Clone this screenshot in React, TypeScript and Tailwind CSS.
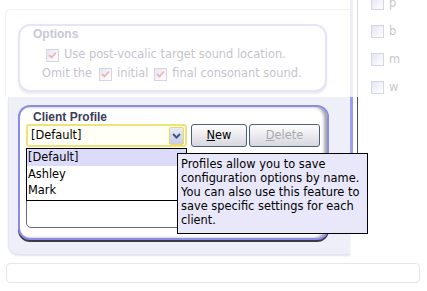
import React from "react";

const font = { fontFamily: '"DejaVu Sans", Verdana, sans-serif' };
const boldFont = { fontFamily: '"Liberation Sans", Arial, sans-serif' };

function FadedCheck({ checked }: { checked?: boolean }) {
  return (
    <span className="w-[13px] h-[13px] shrink-0 border border-[#d6d6e2] bg-gradient-to-br from-[#e6e6f6] to-white flex items-center justify-center">
      {checked && (
        <svg width="9" height="8" viewBox="0 0 9 8">
          <path d="M1 4 L3.5 6.5 L8 1.5" stroke="#f0b4b4" strokeWidth="1.8" fill="none" />
        </svg>
      )}
    </span>
  );
}

export default function App() {
  return (
    <div
      className="w-[427px] h-[291px] bg-white overflow-hidden relative flex flex-col text-[11.4px] text-black"
      style={font}
    >
      {/* Row A */}
      <div className="flex h-[256px]">
        {/* Left column */}
        <div className="w-[350px] flex flex-col">
          {/* Top faded section */}
          <div className="h-[97px] pl-[5px] pt-[9px]">
            <div className="h-full border-l border-t border-[#f0f0f5] rounded-tl-[6px] pl-[12px] pt-[14px]">
              <div className="w-[309px] h-[68px] border-2 border-[#e4e4fa] rounded-[12px] bg-white shadow-[0_2px_2px_#ececf0] pt-[1px] text-[#c4c4cc]">
                <div className="pl-[13px] leading-[14px] text-[12px] font-bold text-[#c8c8d8]" style={boldFont}>
                  Options
                </div>
                <div className="mt-[6px] h-[16px] flex items-center pl-[26px] gap-[5px]">
                  <FadedCheck checked />
                  <span>Use post-vocalic target sound location.</span>
                </div>
                <div className="mt-[3px] h-[16px] flex items-center pl-[22px]">
                  <span>Omit the</span>
                  <span className="ml-[7px]"><FadedCheck checked /></span>
                  <span className="ml-[5px]">initial</span>
                  <span className="ml-[6px]"><FadedCheck checked /></span>
                  <span className="ml-[5px]">final consonant sound.</span>
                </div>
              </div>
            </div>
          </div>
          {/* Lavender band */}
          <div className="h-[157px] ml-[8px] bg-[#efeffa] border-l border-[#e6e6f6] rounded-bl-[10px] shadow-[0_2px_2px_#e2e2ea] pl-[9px] pt-[8px]">
            {/* Client Profile panel */}
            <div className="w-[311px] h-[135px] bg-white border-2 border-[#8c8ce8] rounded-[12px] shadow-[0_2px_0_#3a3a44,inset_-3px_0_3px_rgba(0,0,0,0.35)] pt-[3px] pl-[6px] relative">
              <div className="pl-[7px] leading-[14px] text-[12px] font-bold text-[#3c3c58]" style={boldFont}>
                Client Profile
              </div>
              <div className="flex items-center">
                <div className="w-[161px] h-[23px] border-2 border-[#efe27a] rounded-[3px] bg-[#fffff6] flex items-center pl-[3px] pr-[1px]">
                  <span className="flex-1">[Default]</span>
                  <span className="w-[15px] h-[18px] border border-[#e9da5a] rounded-[2px] bg-gradient-to-b from-[#eaeaf8] to-[#c8cce8] flex items-center justify-center">
                    <svg width="9" height="6" viewBox="0 0 9 6">
                      <path d="M1 1 L4.5 4.5 L8 1" stroke="#44587e" strokeWidth="2" fill="none" />
                    </svg>
                  </span>
                </div>
                <button className="ml-[4px] w-[56px] h-[23px] border border-[#4a6078] rounded-[3px] bg-gradient-to-b from-white to-[#d6d6de] text-black leading-none">
                  <span className="underline">N</span>ew
                </button>
                <button className="ml-[2px] w-[71px] h-[23px] border border-[#4a6078] rounded-[3px] bg-gradient-to-b from-white to-[#d6d6de] text-[#a8a8b0] leading-none">
                  <span className="underline">D</span>elete
                </button>
              </div>
              {/* underlying list box */}
              <div className="mt-[1px] w-[160px] h-[80px] border border-[#6a6a7a] rounded-b-[5px] bg-white" />
              {/* dropdown popup */}
              <div className="absolute left-[6px] top-[41px] w-[161px] h-[53px] border border-black bg-white">
                <div className="h-[17px] bg-[#dcdcfa] pl-[1px] leading-[17px]">[Default]</div>
                <div className="h-[16px] pl-[1px] leading-[16px]">Ashley</div>
                <div className="h-[16px] pl-[1px] leading-[16px]">Mark</div>
              </div>
            </div>
          </div>
        </div>
        {/* Divider lines */}
        <div className="w-[8px] flex">
          <div className="w-[3px] flex flex-col">
            <div className="h-[97px] bg-[#ececfa]" />
            <div className="h-[118px] bg-[#9c9cf0]" />
          </div>
          <div className="w-[4px]" />
          <div className="w-[1px] flex flex-col">
            <div className="h-[97px] bg-[#dcdce0]" />
            <div className="h-[118px] bg-[#50505c]" />
          </div>
        </div>
        {/* Right column */}
        <div className="flex-1 flex flex-col pl-[13px] mt-[-3px] text-[#c8c8cc]">
          {["p", "b", "m", "w"].map((l) => (
            <div key={l} className="h-[28px] flex items-start gap-[5px]">
              <FadedCheck />
              <span className="leading-[13px]">{l}</span>
            </div>
          ))}
        </div>
      </div>
      {/* Bottom box */}
      <div className="mt-[7px] ml-[6px] w-[414px] h-[20px] border border-[#e6e6e8] rounded-[4px]" />

      {/* Tooltip */}
      <div className="absolute left-[177px] top-[153px] w-[191px] h-[81px] bg-[#e8e8fa] border border-black pl-[3px] pt-[3px] leading-[14px]">
        Profiles allow you to save
        <br />
        configuration options by name.
        <br />
        You can also use this feature to
        <br />
        save specific settings for each
        <br />
        client.
      </div>
    </div>
  );
}
